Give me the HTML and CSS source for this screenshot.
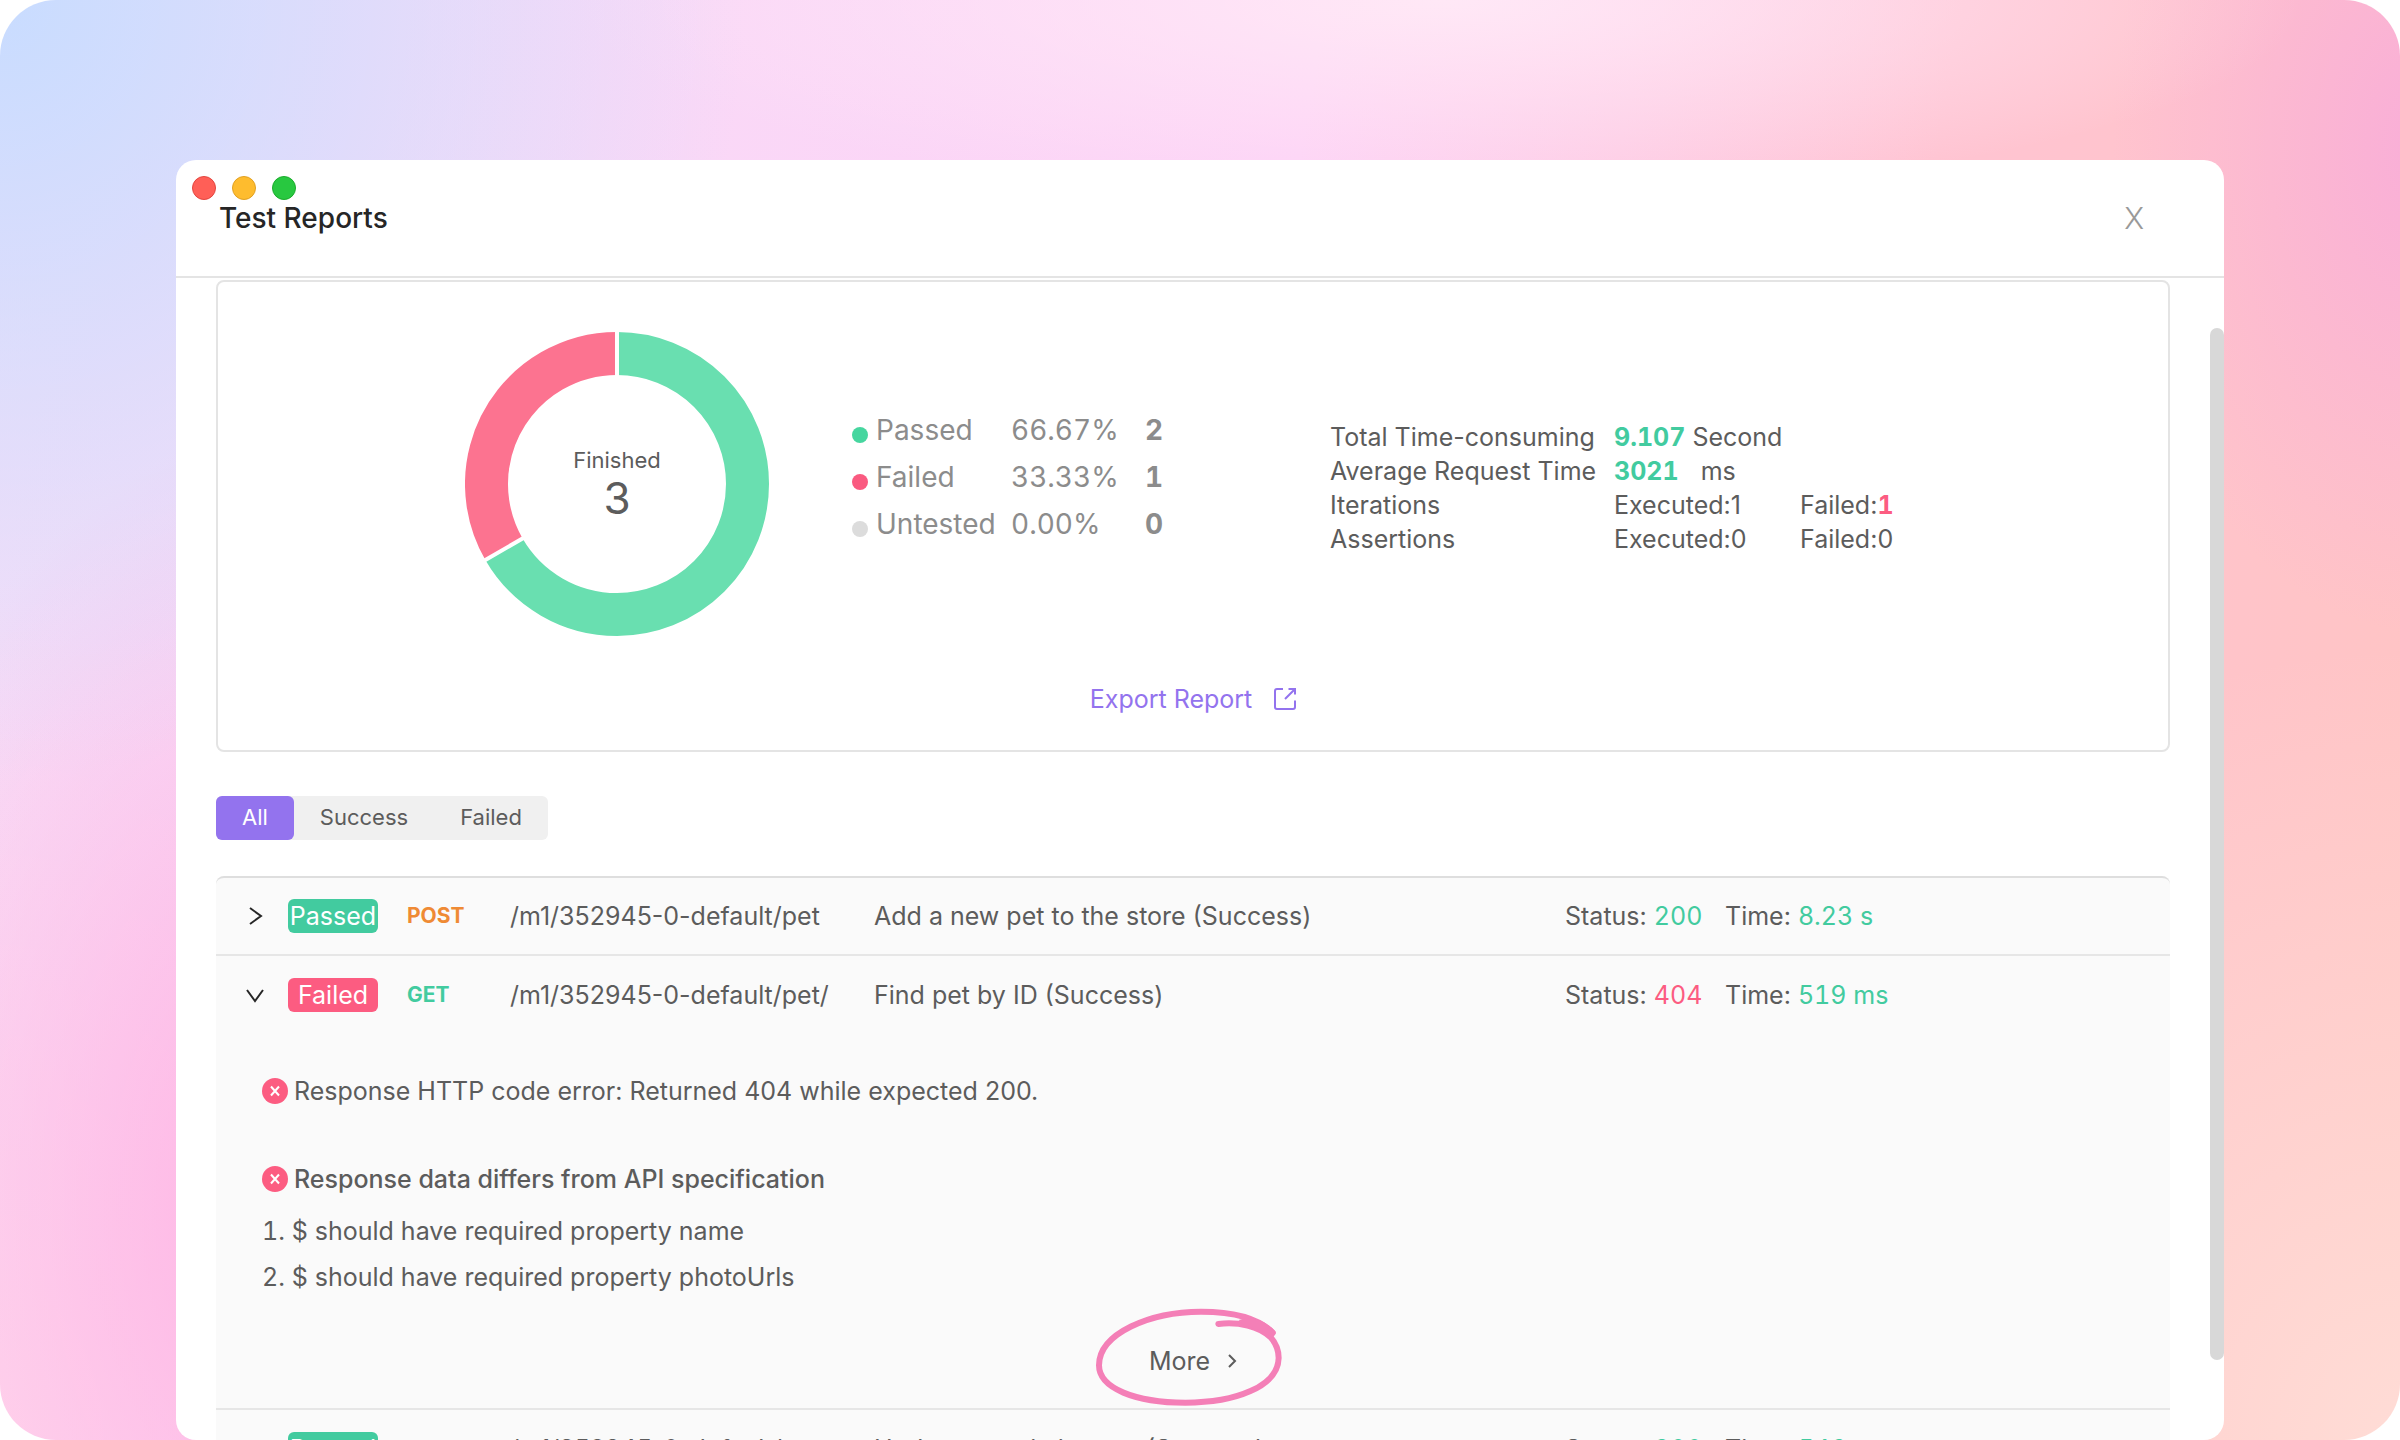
FILE: index.html
```html
<!DOCTYPE html>
<html lang="en">
<head>
<meta charset="utf-8">
<title>Test Reports</title>
<link rel="stylesheet" href="styles.css">
</head>
<body>
<div class="stage">
  <main class="window">
    <header class="titlebar">
      <div class="lights" aria-hidden="true">
        <span class="light light-close"></span>
        <span class="light light-min"></span>
        <span class="light light-max"></span>
      </div>
      <div class="title-row">
        <h1 class="title">Test Reports</h1>
        <button class="close" type="button" aria-label="Close">X</button>
      </div>
    </header>

    <div class="content">
      <section class="panel">
        <div class="overview">
          <div class="donut">
            <svg class="donut-chart" viewBox="-152 -152 304 304" aria-hidden="true">
              <circle class="arc arc-passed" r="130.5" pathLength="300" stroke-dasharray="200 100" transform="rotate(-90)"/>
              <circle class="arc arc-failed" r="130.5" pathLength="300" stroke-dasharray="100 200" transform="rotate(150)"/>
              <path class="arc-gap" d="M0 0V-154M0 0L-133.4 77"/>
            </svg>
            <div class="donut-label">
              <span class="donut-caption">Finished</span>
              <span class="donut-total">3</span>
            </div>
          </div>

          <ul class="legend">
            <li class="legend-item"><span class="dot dot-passed"></span><span>Passed</span><span>66.67%</span><b>2</b></li>
            <li class="legend-item"><span class="dot dot-failed"></span><span>Failed</span><span>33.33%</span><b>1</b></li>
            <li class="legend-item"><span class="dot dot-untested"></span><span>Untested</span><span>0.00%</span><b>0</b></li>
          </ul>

          <table class="stats">
            <colgroup><col class="col-name"><col class="col-value"><col class="col-failed"></colgroup>
            <tbody>
              <tr><th scope="row">Total Time-consuming</th><td colspan="2"><b class="good">9.107</b> Second</td></tr>
              <tr><th scope="row">Average Request Time</th><td colspan="2"><b class="good">3021</b><span class="unit">ms</span></td></tr>
              <tr><th scope="row">Iterations</th><td>Executed:1</td><td>Failed:<b class="bad">1</b></td></tr>
              <tr><th scope="row">Assertions</th><td>Executed:0</td><td>Failed:0</td></tr>
            </tbody>
          </table>
        </div>
        <a class="export" href="#export">Export Report
          <svg class="export-icon" viewBox="0 0 22 22" aria-hidden="true"><path d="M9 1H3Q1 1 1 3V19Q1 21 3 21H19Q21 21 21 19V12.500M11 11L20.500 1.500M14.500 1H21V6.500"/></svg>
        </a>
      </section>

      <div class="tabs">
        <button class="tab tab-active" type="button">All</button>
        <button class="tab" type="button">Success</button>
        <button class="tab" type="button">Failed</button>
      </div>

      <section class="results">
        <article class="result">
          <div class="result-head">
            <button class="toggle" type="button" aria-label="Expand"><svg viewBox="0 0 18 18"><path d="M4 1L15 9L4 17"/></svg></button>
            <span class="badge badge-passed">Passed</span>
            <span class="method method-post">POST</span>
            <span>/m1/352945-0-default/pet</span>
            <span>Add a new pet to the store (Success)</span>
            <span>Status: <span class="good">200</span></span>
            <span>Time: <span class="good">8.23 s</span></span>
          </div>
        </article>

        <article class="result">
          <div class="result-head">
            <button class="toggle" type="button" aria-label="Collapse"><svg viewBox="0 0 18 18"><path d="M1 4L9 15L17 4"/></svg></button>
            <span class="badge badge-failed">Failed</span>
            <span class="method method-get">GET</span>
            <span>/m1/352945-0-default/pet/</span>
            <span>Find pet by ID (Success)</span>
            <span>Status: <span class="bad">404</span></span>
            <span>Time: <span class="good">519 ms</span></span>
          </div>
          <div class="detail">
            <p class="error"><svg class="error-icon" viewBox="0 0 26 26" aria-hidden="true"><circle cx="13" cy="13" r="13"/><path d="M9 8.500L17 17.500M17 8.500L9 17.500"/></svg>Response HTTP code error: Returned 404 while expected 200.</p>
            <p class="error error-strong"><svg class="error-icon" viewBox="0 0 26 26" aria-hidden="true"><circle cx="13" cy="13" r="13"/><path d="M9 8.500L17 17.500M17 8.500L9 17.500"/></svg>Response data differs from API specification</p>
            <ol class="diffs">
              <li>$ should have required property name</li>
              <li>$ should have required property photoUrls</li>
            </ol>
            <button class="more" type="button">More
              <svg class="more-icon" viewBox="0 0 10 14" aria-hidden="true"><path d="M2 1L8 7L2 13"/></svg>
              <svg class="marker" viewBox="102 54 558 294" aria-hidden="true">
                <path class="marker-line" d="M469 102C530 95 590 108 626 142C640 158 650 178 650 204C648 290 520 338 370 338C220 338 111 295 111 226C111 130 265 65 417 65C510 65 590 85 632 128"/>
                <path class="marker-fill" d="M530 90C570 78 612 92 638 122C644 128 640 136 634 139L640 152C616 128 586 116 548 108Z"/>
              </svg>
            </button>
          </div>
        </article>

        <article class="result">
          <div class="result-head">
            <button class="toggle" type="button" aria-label="Expand"><svg viewBox="0 0 18 18"><path d="M4 1L15 9L4 17"/></svg></button>
            <span class="badge badge-passed">Passed</span>
            <span class="method method-post">PUT</span>
            <span>/m1/352945-0-default/pet</span>
            <span>Update an existing pet (Success)</span>
            <span>Status: <span class="good">200</span></span>
            <span>Time: <span class="good">546 ms</span></span>
          </div>
        </article>
      </section>
    </div>
    <div class="scrollbar" aria-hidden="true"></div>
  </main>
</div>
</body>
</html>
```
FILE: styles.css
```css
* { box-sizing: border-box; }

body {
  margin: 0;
  background: #fff;
  color: #5c5c5c;
  font-family: Inter, "Liberation Sans", sans-serif;
  font-size: 25px;
  line-height: 34px;
}

h1, p, ul, ol { margin: 0; padding: 0; }

button {
  border: 0;
  padding: 0;
  background: none;
  color: inherit;
  font: inherit;
  cursor: pointer;
}

svg { display: block; fill: none; }

.stage {
  height: 100vh;
  padding: 160px 176px 0;
  overflow: hidden;
  border-radius: 56px;
  background:
    radial-gradient(ellipse 31% 54% at 0% 0%, #c8dcff 0%, #c8dcff00 100%),
    radial-gradient(ellipse 20% 54% at 12% 84%, #ffb4e4 0%, #ffb4e400 100%),
    radial-gradient(ellipse 36% 14% at 60% 0%, #ffe8f6 0%, #ffe8f600 100%),
    radial-gradient(ellipse 13% 34% at 101% 10%, #f9aed8 0%, #f9aed800 100%),
    radial-gradient(ellipse 30% 55% at 100% 100%, #ffdcd6 0%, #ffdcd600 100%),
    radial-gradient(ellipse 20% 50% at 0% 100%, #ffdcee 0%, #ffdcee00 100%),
    linear-gradient(100deg, #f6dff8 0%, #fdd2f6 50%, #ffc4d2 74%, #ffc4c2 100%);
}

.window {
  position: relative;
  height: 100%;
  overflow: hidden;
  border-radius: 20px;
  background: #fff;
}

.titlebar {
  padding: 16px 16px 40px;
  border-bottom: 2px solid #e4e4e4;
}

.lights { display: flex; gap: 16px; }

.light {
  width: 24px;
  height: 24px;
  border: 1px solid;
  border-radius: 50%;
}
.light-close { background: #ff5f57; border-color: #e2463f; }
.light-min { background: #febc2e; border-color: #e0a023; }
.light-max { background: #28c840; border-color: #1bac2c; }

.title-row {
  display: flex;
  justify-content: space-between;
  align-items: center;
  height: 36px;
  padding: 0 64px 0 27px;
}
.title { color: #262626; font-size: 28px; font-weight: 500; }
.close { color: #999; font-size: 30px; font-weight: 300; }

.content { padding: 2px 54px 0 40px; }

.panel {
  padding: 50px 0 34px;
  border: 2px solid #e4e4e4;
  border-radius: 8px;
}

.overview { display: flex; justify-content: center; align-items: center; }

.donut { display: grid; width: 304px; height: 304px; }
.donut > * { grid-area: 1 / 1; }
.arc { stroke-width: 43; }
.arc-passed { stroke: #69dfb0; }
.arc-failed { stroke: #fc7390; }
.arc-gap { stroke: #fff; stroke-width: 4; }
.donut-label {
  display: flex;
  flex-direction: column;
  align-items: center;
  justify-content: center;
  padding-bottom: 4px;
}
.donut-caption { font-size: 22px; line-height: 32px; }
.donut-total { font-size: 44px; line-height: 44px; }

.legend {
  width: 310px;
  margin: 0 168px 14px 83px;
  list-style: none;
  color: #8c8c8c;
  font-size: 28px;
  line-height: 47px;
  font-variant-numeric: tabular-nums;
}
.legend-item {
  display: grid;
  grid-template-columns: 24px 135px 134px 1fr;
  align-items: center;
}
.dot { width: 16px; height: 16px; margin-top: 10px; border-radius: 50%; }
.dot-passed { background: #46d69f; }
.dot-failed { background: #fa5a80; }
.dot-untested { background: #dcdcdc; }

.stats {
  width: 591px;
  margin-top: 8px;
  border-collapse: collapse;
  table-layout: fixed;
}
.stats th, .stats td { padding: 0; text-align: left; font-weight: 400; white-space: nowrap; }
.stats b { font-weight: 700; }
.col-name { width: 284px; }
.col-value { width: 186px; }
.unit { margin-left: 22px; }

.good, .bad { font-variant-numeric: tabular-nums; }
.good { color: #42cb9f; }
.bad { color: #fc5c81; }

.export {
  display: flex;
  align-items: center;
  justify-content: center;
  gap: 22px;
  width: max-content;
  margin: 46px auto 0;
  color: #9373ee;
  text-decoration: none;
}
.export-icon { width: 22px; height: 22px; stroke: currentColor; stroke-width: 2; }

.tabs {
  display: flex;
  width: max-content;
  margin-top: 44px;
  border-radius: 6px;
  background: #f0f0f0;
}
.tab { height: 44px; padding: 0 26px 3px; font-size: 22px; }
.tab-active { border-radius: 6px; background: #9373ee; color: #fff; }

.results {
  margin-top: 36px;
  border-radius: 8px;
  background: #fafafa;
}
.result { border-top: 2px solid #e6e6e6; }
.result:first-child { border-color: #dedede; border-radius: 8px 8px 0 0; }

.result-head {
  display: grid;
  grid-template-columns: 42px 119px 103px 364px 691fr 160px 445fr;
  align-items: center;
  height: 78px;
  padding-left: 30px;
  white-space: nowrap;
}
.result:first-child .result-head { height: 76px; }
.toggle { width: 18px; height: 18px; }
.toggle svg { width: 18px; height: 18px; stroke: #262626; stroke-width: 2; }

.badge {
  width: 90px;
  border-radius: 6px;
  color: #fff;
  text-align: center;
}
.badge-passed { background: #42cb9f; }
.badge-failed { background: #fc5c81; }

.method { font-size: 21px; font-weight: 700; }
.method-post { color: #ef8a34; }
.method-get { color: #42cb9f; }

.detail { padding: 40px 46px 30px; }

.error { display: flex; align-items: center; gap: 6px; }
.error-strong { margin-top: 54px; font-weight: 500; }
.error-icon { width: 26px; height: 26px; }
.error-icon circle { fill: #fc5c81; }
.error-icon path { stroke: #fff; stroke-width: 2; }

.diffs {
  margin-top: 12px;
  list-style-position: inside;
  line-height: 46px;
}

.more {
  position: relative;
  display: flex;
  align-items: center;
  gap: 17px;
  margin: 44px auto 0;
}
.more-icon { width: 10px; height: 14px; stroke: currentColor; stroke-width: 2; }
.marker { position: absolute; top: -36px; left: -53px; width: 186px; height: 98px; }
.marker-line { stroke: #f47fb7; stroke-width: 18; stroke-linecap: round; stroke-linejoin: round; }
.marker-fill { fill: #f47fb7; }

.scrollbar {
  position: absolute;
  top: 168px;
  right: 0;
  bottom: 80px;
  width: 14px;
  border-radius: 7px;
  background: #d8d8d8;
}
```
